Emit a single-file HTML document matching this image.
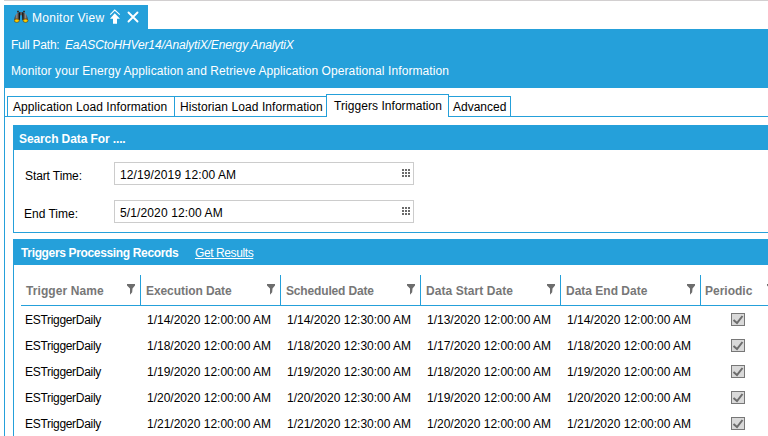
<!DOCTYPE html>
<html><head><meta charset="utf-8">
<style>
*{margin:0;padding:0;box-sizing:border-box}
html,body{width:768px;height:436px;overflow:hidden;background:#fff}
body{position:relative;font-family:"Liberation Sans",sans-serif;font-size:12px;color:#000}
.r{position:absolute}
.a{position:absolute;white-space:nowrap;line-height:12px}
.bl{background:#25A0DA}
.tab{border:1px solid #25A0DA;background:#fff}
.inp{border:1px solid #CCCCCC;background:#fff}
.cb{border:1px solid #777;background:#D9D9D9}
</style></head><body>
<div class="r" style="left:4px;top:0;width:764px;height:1px;background:#D2CFD0"></div>
<div class="r bl" style="left:4px;top:5px;width:144px;height:24px"></div>
<svg class="r" style="left:14px;top:10px" width="15" height="13" viewBox="0 0 15 13">
  <defs><linearGradient id="gb" x1="0" y1="0" x2="1" y2="0"><stop offset="0" stop-color="#333"/><stop offset="0.18" stop-color="#8c8c8c"/><stop offset="0.38" stop-color="#111"/><stop offset="0.5" stop-color="#777"/><stop offset="0.62" stop-color="#111"/><stop offset="0.82" stop-color="#8c8c8c"/><stop offset="1" stop-color="#333"/></linearGradient>
  <radialGradient id="gl" cx="0.5" cy="0.6" r="0.6"><stop offset="0" stop-color="#FFEE00"/><stop offset="0.6" stop-color="#F2B000"/><stop offset="1" stop-color="#B07000"/></radialGradient></defs>
  <rect x="3" y="0.8" width="2" height="1.6" fill="#333"/><rect x="9" y="0.8" width="2" height="1.6" fill="#333"/>
  <path d="M0.4 10 C0.6 6 2 2.2 7 2 C12 2.2 13.6 6 13.8 10 L8.3 10 L8 5.2 L6.2 5.2 L5.8 10 Z" fill="url(#gb)"/>
  <ellipse cx="2.8" cy="10.6" rx="2.6" ry="1.8" fill="url(#gl)" stroke="#5a4000" stroke-width="0.5"/>
  <ellipse cx="11.5" cy="10.6" rx="2.6" ry="1.8" fill="url(#gl)" stroke="#5a4000" stroke-width="0.5"/>
</svg>
<div class="a" style="left:32.00px;top:12px;font-size:12px;letter-spacing:0.273px;color:#fff">Monitor View</div>
<svg class="r" style="left:109px;top:9px" width="12" height="16" viewBox="0 0 12 16">
  <path d="M1.2 5.6 L5.75 1 L10.8 5.6" stroke="#fff" stroke-width="1.1" fill="none"/>
  <path d="M5.75 4.3 L11 9.8 L8 9.8 L8 14.7 L4 14.7 L4 9.8 L1 9.8 Z" fill="#fff"/>
</svg>
<svg class="r" style="left:127px;top:11px" width="12" height="12" viewBox="0 0 12 12">
  <path d="M1.5 1.5 L10.5 10.5 M10.5 1.5 L1.5 10.5" stroke="#fff" stroke-width="1.9" stroke-linecap="round"/>
</svg>
<div class="r bl" style="left:4px;top:29px;width:764px;height:59px"></div>
<div class="a" style="left:11.00px;top:39px;font-size:12px;letter-spacing:-0.222px;color:#fff">Full Path:</div>
<div class="a" style="left:65.00px;top:39px;font-size:12px;letter-spacing:-0.132px;color:#fff"><i>EaASCtoHHVer14/AnalytiX/Energy AnalytiX</i></div>
<div class="a" style="left:11.00px;top:65px;font-size:12px;letter-spacing:0.089px;color:#fff">Monitor your Energy Application and Retrieve Application Operational Information</div>
<div class="r bl" style="left:4px;top:88px;width:1px;height:348px"></div>
<div class="r bl" style="left:4px;top:116px;width:764px;height:1px"></div>
<div class="r tab" style="left:7px;top:96px;width:168px;height:21px"></div>
<div class="r tab" style="left:174px;top:96px;width:153px;height:21px"></div>
<div class="r tab" style="left:448px;top:96px;width:63px;height:21px"></div>
<div class="r tab" style="left:326px;top:94px;width:123px;height:23px;border-bottom:none"></div>
<div class="a" style="left:13.00px;top:101px;font-size:12px;letter-spacing:0.074px;">Application Load Information</div>
<div class="a" style="left:180.00px;top:101px;font-size:12px;letter-spacing:0.080px;">Historian Load Information</div>
<div class="a" style="left:334.00px;top:100px;font-size:12px;letter-spacing:0.053px;">Triggers Information</div>
<div class="a" style="left:453.00px;top:101px;font-size:12px;letter-spacing:0.000px;">Advanced</div>
<div class="r bl" style="left:13px;top:125px;width:755px;height:25px"></div>
<div class="r" style="left:13px;top:149px;width:755px;height:84px;border-left:1px solid #25A0DA;border-bottom:1px solid #25A0DA"></div>
<div class="a" style="left:19.00px;top:133px;font-size:12px;letter-spacing:-0.105px;color:#fff;font-weight:bold">Search Data For ....</div>
<div class="a" style="left:25.00px;top:170px;font-size:12px;letter-spacing:-0.100px;">Start Time:</div>
<div class="a" style="left:24.00px;top:208px;font-size:12px;letter-spacing:0.000px;">End Time:</div>
<div class="r inp" style="left:114px;top:162px;width:300px;height:23px"></div>
<div class="r inp" style="left:114px;top:200px;width:300px;height:23px"></div>
<div class="a" style="left:120.00px;top:169px;font-size:12px;letter-spacing:0.111px;">12/19/2019 12:00 AM</div>
<div class="a" style="left:120.00px;top:207px;font-size:12px;letter-spacing:0.125px;">5/1/2020 12:00 AM</div>
<svg class="r" style="left:402px;top:169px" width="8" height="8" viewBox="0 0 8 8"><g fill="#6a6a6a"><rect x="0" y="0" width="2" height="2"/><rect x="0" y="3" width="2" height="2"/><rect x="0" y="6" width="2" height="2"/><rect x="3" y="0" width="2" height="2"/><rect x="3" y="3" width="2" height="2"/><rect x="3" y="6" width="2" height="2"/><rect x="6" y="0" width="2" height="2"/><rect x="6" y="3" width="2" height="2"/><rect x="6" y="6" width="2" height="2"/></g></svg>
<svg class="r" style="left:402px;top:207px" width="8" height="8" viewBox="0 0 8 8"><g fill="#6a6a6a"><rect x="0" y="0" width="2" height="2"/><rect x="0" y="3" width="2" height="2"/><rect x="0" y="6" width="2" height="2"/><rect x="3" y="0" width="2" height="2"/><rect x="3" y="3" width="2" height="2"/><rect x="3" y="6" width="2" height="2"/><rect x="6" y="0" width="2" height="2"/><rect x="6" y="3" width="2" height="2"/><rect x="6" y="6" width="2" height="2"/></g></svg>
<div class="r bl" style="left:13px;top:239px;width:755px;height:26px"></div>
<div class="r" style="left:13px;top:264px;width:755px;height:172px;border-left:1px solid #25A0DA"></div>
<div class="a" style="left:21.00px;top:247px;font-size:12px;letter-spacing:-0.346px;color:#fff;font-weight:bold">Triggers Processing Records</div>
<div class="a" style="left:195.00px;top:247px;font-size:12px;letter-spacing:-0.400px;color:#fff;text-decoration:underline">Get Results</div>
<div class="r bl" style="left:21px;top:305px;width:747px;height:1px"></div>
<div class="r bl" style="left:140px;top:275px;width:1px;height:30px"></div>
<div class="r bl" style="left:280px;top:275px;width:1px;height:30px"></div>
<div class="r bl" style="left:420px;top:275px;width:1px;height:30px"></div>
<div class="r bl" style="left:560px;top:275px;width:1px;height:30px"></div>
<div class="r bl" style="left:700px;top:275px;width:1px;height:30px"></div>
<div class="a" style="left:26.00px;top:285px;font-size:12px;letter-spacing:0.091px;color:#777;font-weight:bold">Trigger Name</div>
<div class="a" style="left:146.00px;top:285px;font-size:12px;letter-spacing:-0.077px;color:#777;font-weight:bold">Execution Date</div>
<div class="a" style="left:286.00px;top:285px;font-size:12px;letter-spacing:-0.154px;color:#777;font-weight:bold">Scheduled Date</div>
<div class="a" style="left:426.00px;top:285px;font-size:12px;letter-spacing:0.071px;color:#777;font-weight:bold">Data Start Date</div>
<div class="a" style="left:566.00px;top:285px;font-size:12px;letter-spacing:0.000px;color:#777;font-weight:bold">Data End Date</div>
<div class="a" style="left:705.00px;top:285px;font-size:12px;letter-spacing:0.000px;color:#777;font-weight:bold">Periodic</div>
<svg class="r" style="left:127px;top:284px" width="8" height="11" viewBox="0 0 8 11"><path d="M0 0 H8 V1.5 L5.5 4.5 L5.2 8.2 L3 10.8 L3 4.5 L0 1.5 Z" fill="#6d6d6d"/></svg>
<svg class="r" style="left:267px;top:284px" width="8" height="11" viewBox="0 0 8 11"><path d="M0 0 H8 V1.5 L5.5 4.5 L5.2 8.2 L3 10.8 L3 4.5 L0 1.5 Z" fill="#6d6d6d"/></svg>
<svg class="r" style="left:407px;top:284px" width="8" height="11" viewBox="0 0 8 11"><path d="M0 0 H8 V1.5 L5.5 4.5 L5.2 8.2 L3 10.8 L3 4.5 L0 1.5 Z" fill="#6d6d6d"/></svg>
<svg class="r" style="left:547px;top:284px" width="8" height="11" viewBox="0 0 8 11"><path d="M0 0 H8 V1.5 L5.5 4.5 L5.2 8.2 L3 10.8 L3 4.5 L0 1.5 Z" fill="#6d6d6d"/></svg>
<svg class="r" style="left:687px;top:284px" width="8" height="11" viewBox="0 0 8 11"><path d="M0 0 H8 V1.5 L5.5 4.5 L5.2 8.2 L3 10.8 L3 4.5 L0 1.5 Z" fill="#6d6d6d"/></svg>
<svg class="r" style="left:767px;top:284px" width="8" height="11" viewBox="0 0 8 11"><path d="M0 0 H8 V1.5 L5.5 4.5 L5.2 8.2 L3 10.8 L3 4.5 L0 1.5 Z" fill="#6d6d6d"/></svg>
<div class="a" style="left:25.00px;top:314px;font-size:12px;letter-spacing:-0.308px;">ESTriggerDaily</div>
<div class="a" style="left:147.00px;top:314px;font-size:12px;letter-spacing:0.000px;">1/14/2020 12:00:00 AM</div>
<div class="a" style="left:287.00px;top:314px;font-size:12px;letter-spacing:0.000px;">1/14/2020 12:30:00 AM</div>
<div class="a" style="left:427.00px;top:314px;font-size:12px;letter-spacing:0.000px;">1/13/2020 12:00:00 AM</div>
<div class="a" style="left:567.00px;top:314px;font-size:12px;letter-spacing:0.000px;">1/14/2020 12:00:00 AM</div>
<div class="r cb" style="left:731px;top:313px;width:14px;height:13px"><svg style="position:absolute;left:0;top:0" width="12" height="11" viewBox="0 0 12 11"><path d="M1.5 6 L5 9 L10.5 2" stroke="#6d6d6d" stroke-width="2" fill="none"/></svg></div>
<div class="a" style="left:25.00px;top:340px;font-size:12px;letter-spacing:-0.308px;">ESTriggerDaily</div>
<div class="a" style="left:147.00px;top:340px;font-size:12px;letter-spacing:0.000px;">1/18/2020 12:00:00 AM</div>
<div class="a" style="left:287.00px;top:340px;font-size:12px;letter-spacing:0.000px;">1/18/2020 12:30:00 AM</div>
<div class="a" style="left:427.00px;top:340px;font-size:12px;letter-spacing:0.000px;">1/17/2020 12:00:00 AM</div>
<div class="a" style="left:567.00px;top:340px;font-size:12px;letter-spacing:0.000px;">1/18/2020 12:00:00 AM</div>
<div class="r cb" style="left:731px;top:339px;width:14px;height:13px"><svg style="position:absolute;left:0;top:0" width="12" height="11" viewBox="0 0 12 11"><path d="M1.5 6 L5 9 L10.5 2" stroke="#6d6d6d" stroke-width="2" fill="none"/></svg></div>
<div class="a" style="left:25.00px;top:366px;font-size:12px;letter-spacing:-0.308px;">ESTriggerDaily</div>
<div class="a" style="left:147.00px;top:366px;font-size:12px;letter-spacing:0.000px;">1/19/2020 12:00:00 AM</div>
<div class="a" style="left:287.00px;top:366px;font-size:12px;letter-spacing:0.000px;">1/19/2020 12:30:00 AM</div>
<div class="a" style="left:427.00px;top:366px;font-size:12px;letter-spacing:0.000px;">1/18/2020 12:00:00 AM</div>
<div class="a" style="left:567.00px;top:366px;font-size:12px;letter-spacing:0.000px;">1/19/2020 12:00:00 AM</div>
<div class="r cb" style="left:731px;top:365px;width:14px;height:13px"><svg style="position:absolute;left:0;top:0" width="12" height="11" viewBox="0 0 12 11"><path d="M1.5 6 L5 9 L10.5 2" stroke="#6d6d6d" stroke-width="2" fill="none"/></svg></div>
<div class="a" style="left:25.00px;top:392px;font-size:12px;letter-spacing:-0.308px;">ESTriggerDaily</div>
<div class="a" style="left:147.00px;top:392px;font-size:12px;letter-spacing:0.000px;">1/20/2020 12:00:00 AM</div>
<div class="a" style="left:287.00px;top:392px;font-size:12px;letter-spacing:0.000px;">1/20/2020 12:30:00 AM</div>
<div class="a" style="left:427.00px;top:392px;font-size:12px;letter-spacing:0.000px;">1/19/2020 12:00:00 AM</div>
<div class="a" style="left:567.00px;top:392px;font-size:12px;letter-spacing:0.000px;">1/20/2020 12:00:00 AM</div>
<div class="r cb" style="left:731px;top:391px;width:14px;height:13px"><svg style="position:absolute;left:0;top:0" width="12" height="11" viewBox="0 0 12 11"><path d="M1.5 6 L5 9 L10.5 2" stroke="#6d6d6d" stroke-width="2" fill="none"/></svg></div>
<div class="a" style="left:25.00px;top:418px;font-size:12px;letter-spacing:-0.308px;">ESTriggerDaily</div>
<div class="a" style="left:147.00px;top:418px;font-size:12px;letter-spacing:0.000px;">1/21/2020 12:00:00 AM</div>
<div class="a" style="left:287.00px;top:418px;font-size:12px;letter-spacing:0.000px;">1/21/2020 12:30:00 AM</div>
<div class="a" style="left:427.00px;top:418px;font-size:12px;letter-spacing:0.000px;">1/20/2020 12:00:00 AM</div>
<div class="a" style="left:567.00px;top:418px;font-size:12px;letter-spacing:0.000px;">1/21/2020 12:00:00 AM</div>
<div class="r cb" style="left:731px;top:417px;width:14px;height:13px"><svg style="position:absolute;left:0;top:0" width="12" height="11" viewBox="0 0 12 11"><path d="M1.5 6 L5 9 L10.5 2" stroke="#6d6d6d" stroke-width="2" fill="none"/></svg></div>
</body></html>
